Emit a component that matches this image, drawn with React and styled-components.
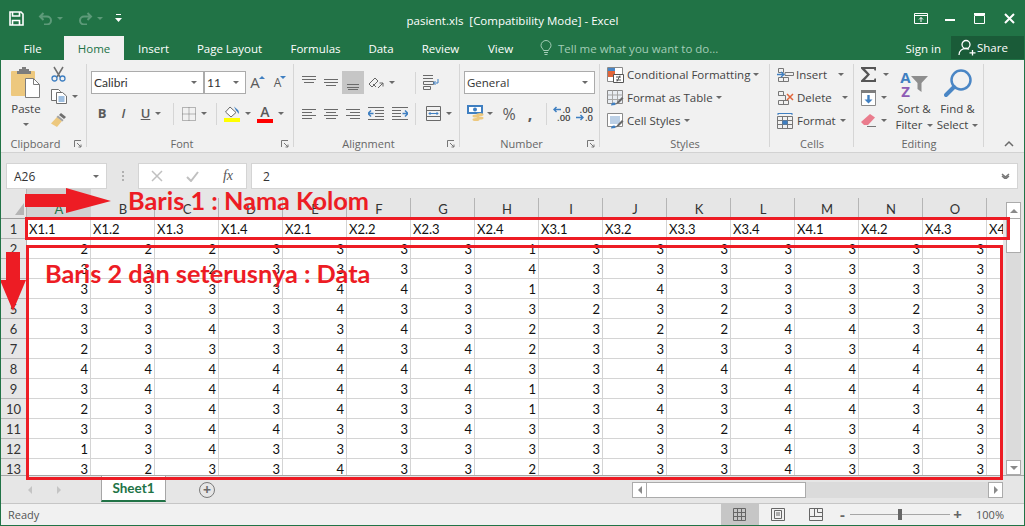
import React from "react";
import styled, { createGlobalStyle } from "styled-components";

const GREEN = "#217346";
const RED = "#ed1c24";
const GRAY = "#6a6a6a";
const BLUE = "#3f7fc1";
const UI = '"Open Sans", "Noto Sans", sans-serif';
const SHEET = '"Lato", "Liberation Sans", sans-serif';

const GlobalStyle = createGlobalStyle`
  html, body { margin: 0; padding: 0; background: #fff; }
  body { font-family: ${UI}; overflow: hidden; }
`;

const Window = styled.div`
  position: relative;
  width: 1025px;
  height: 526px;
  box-sizing: border-box;
  border: 1px solid ${GREEN};
  border-top: 0;
  display: flex;
  flex-direction: column;
  overflow: hidden;
  background: #e6e6e6;
`;

/* title bar */
const TitleBar = styled.header`
  height: 36px;
  background: ${GREEN};
  display: grid;
  grid-template-columns: 1fr auto 1fr;
  align-items: center;
  color: #fff;
`;
const Qat = styled.div`
  display: flex;
  align-items: center;
  padding: 1px 0 0 8px;
`;
const QatItem = styled.span`
  display: flex;
  align-items: center;
  gap: 4px;
  margin-right: ${(p) => p.$mr || 0}px;
`;
const DimCaret = styled.i`
  width: 0;
  height: 0;
  border: 3px solid transparent;
  border-bottom: 0;
  border-top-color: #5d9a79;
`;
const Title = styled.div`
  font-size: 11.5px;
  white-space: pre;
  padding-top: 4px;
`;
const WindowButtons = styled.div`
  display: flex;
  justify-content: flex-end;
`;
const WindowButton = styled.span`
  width: 29.5px;
  display: flex;
  justify-content: center;
`;

/* ribbon tabs */
const TabRow = styled.nav`
  height: 24px;
  background: ${GREEN};
  display: flex;
  align-items: stretch;
`;
const Tab = styled.div`
  width: ${(p) => p.$w}px;
  display: flex;
  align-items: center;
  justify-content: center;
  font-size: 11.5px;
  color: ${(p) => (p.$active ? GREEN : "#fff")};
  background: ${(p) => (p.$active ? "#f1f1f1" : "transparent")};
`;
const TellMe = styled.div`
  display: flex;
  align-items: center;
  gap: 6px;
  margin-left: 13px;
  font-size: 11.5px;
  color: #a3cdb6;
`;
const SignIn = styled.div`
  margin-left: auto;
  margin-right: 10px;
  font-size: 11.5px;
  color: #fff;
  align-self: center;
`;
const Share = styled.div`
  width: 73px;
  margin-bottom: 1px;
  background: #1a5b38;
  color: #fff;
  font-size: 11.5px;
  display: flex;
  align-items: center;
  gap: 0;
  padding-left: 7px;
  box-sizing: border-box;
`;

/* ribbon */
const Ribbon = styled.section`
  height: 93px;
  box-sizing: border-box;
  background: #f1f1f1;
  border-bottom: 1px solid #d2d2d2;
  display: flex;
  color: #444;
  font-size: 11.5px;
`;
const Group = styled.div`
  width: ${(p) => p.$w}px;
  flex: ${(p) => (p.$grow ? 1 : "none")};
  display: flex;
  flex-direction: column;
  background: ${(p) =>
    p.$grow ? "none" : "linear-gradient(#d6d6d6, #d6d6d6) right 4px / 1px 83px no-repeat"};
`;
const GroupBody = styled.div`
  flex: 1;
  min-height: 0;
  display: flex;
`;
const GroupFooter = styled.div`
  height: 17px;
  display: flex;
  align-items: center;
  font-size: 11px;
  color: #666;
`;
const GroupLabel = styled.span`
  flex: 1;
  text-align: center;
`;
const Launcher = styled.span`
  width: 17px;
  box-sizing: border-box;
  padding-left: 4px;
  display: flex;
`;
const Collapse = styled.span`
  margin-left: auto;
  margin-right: 10px;
  display: flex;
`;
const Stack = styled.div`
  display: flex;
  flex-direction: column;
  gap: 8px;
  padding: 11px 0 0 4px;
`;
const Row = styled.div`
  display: flex;
  align-items: center;
  height: 23px;
`;
const IconBtn = styled.span`
  width: ${(p) => p.$w}px;
  height: 23px;
  display: flex;
  align-items: center;
  justify-content: center;
  gap: ${(p) => p.$gap ?? 5}px;
  background: ${(p) => (p.$active ? "#c6c6c6" : "transparent")};
`;
const Caret = styled.i`
  flex: none;
  width: 0;
  height: 0;
  border: 3px solid transparent;
  border-bottom: 0;
  border-top-color: ${GRAY};
`;
const CellCaret = styled(Caret)`
  margin-left: ${(p) => p.$ml}px;
`;
const VSep = styled.span`
  width: 1px;
  height: 22px;
  background: #d6d6d6;
  margin: 0 ${(p) => p.$r ?? 4}px 0 ${(p) => p.$l ?? 5}px;
`;
const Select = styled.div`
  width: ${(p) => p.$w}px;
  height: 23px;
  box-sizing: border-box;
  border: 1px solid #ababab;
  background: #fff;
  color: #333;
  padding: 0 6px 0 2px;
  display: flex;
  align-items: center;
  justify-content: space-between;
  font-family: ${(p) => p.$font || UI};
  font-size: ${(p) => (p.$font ? 12 : 11.5)}px;
`;
const GlyphText = styled.span`
  color: ${(p) => p.$color || "#5a5a5a"};
  font-size: ${(p) => p.$size || 13}px;
  font-weight: ${(p) => p.$weight || 400};
  font-style: ${(p) => (p.$italic ? "italic" : "normal")};
  text-decoration: ${(p) => (p.$under ? "underline" : "none")};
  line-height: 1;
`;
const FontColorWrap = styled.span`
  width: 16px;
  height: 18px;
  box-sizing: border-box;
  display: flex;
  justify-content: center;
  border-bottom: 4px solid #ff0000;
`;
const SizeArrow = styled.i`
  align-self: flex-start;
  margin: 5px 0 0 -1px;
  width: 0;
  height: 0;
  border: 3px solid transparent;
  ${(p) => (p.$up ? `border-top: 0; border-bottom-color: ${BLUE};` : `border-bottom: 0; border-top-color: ${BLUE};`)}
`;
const Decimals = styled.span`
  display: flex;
  flex-direction: column;
  align-items: flex-end;
  font-size: 9.5px;
  line-height: 8px;
  color: #444;
  font-weight: 600;
`;
const DecimalLine = styled.span`
  display: flex;
  align-items: center;
  gap: 1px;
`;

const PasteBtn = styled.div`
  width: 50px;
  display: flex;
  flex-direction: column;
  align-items: center;
  padding-top: 7px;
`;
const PasteLabel = styled.span`
  margin: 3px 0 6px;
  line-height: 16px;
`;
const SmallCol = styled.div`
  display: flex;
  flex-direction: column;
  padding-top: 2px;
`;
const SmallBtn = styled.div`
  height: 23px;
  display: flex;
  align-items: center;
  gap: ${(p) => p.$gap ?? 5}px;
  padding-left: ${(p) => p.$pl ?? 0}px;
  white-space: nowrap;
`;
const List = styled.div`
  ${(p) => (p.$w ? `width: ${p.$w}px; box-sizing: border-box;` : "")}
  display: flex;
  flex-direction: column;
  padding: 3px 0 0 6px;
`;
const Big = styled.div`
  width: ${(p) => p.$w}px;
  display: flex;
  flex-direction: column;
  align-items: center;
  padding-top: 7px;
  line-height: 16px;
`;
const BigLabel = styled.span`
  display: flex;
  align-items: center;
  gap: 4px;
  white-space: nowrap;
`;
const BigIcon = styled.span`
  height: 33px;
  margin-bottom: 1px;
  display: flex;
  align-items: center;
`;
const SortLetters = styled.span`
  display: flex;
  flex-direction: column;
  align-items: center;
  font-size: 15px;
  font-weight: 700;
  line-height: 14px;
`;
const Letter = styled.span`
  color: ${(p) => p.$color};
`;

/* formula bar */
const FormulaBar = styled.div`
  height: 36px;
  box-sizing: border-box;
  padding: 10px 6px 0 5px;
  display: flex;
  align-items: stretch;
  background: #e6e6e6;
  font-size: 12px;
  color: #333;
`;
const FieldBox = styled.div`
  box-sizing: border-box;
  width: ${(p) => p.$w}px;
  flex: ${(p) => (p.$grow ? 1 : "none")};
  background: #fff;
  border: 1px solid #d4d4d4;
  display: flex;
  align-items: center;
  justify-content: space-between;
  padding: 0 7px 0 ${(p) => p.$pl ?? 6}px;
`;
const Dots = styled.span`
  width: 31px;
  display: flex;
  flex-direction: column;
  align-items: center;
  justify-content: center;
  gap: 2px;
  & > i {
    width: 2px;
    height: 2px;
    background: #b0b0b0;
  }
`;
const FxButtons = styled.div`
  width: 109px;
  box-sizing: border-box;
  margin-right: 4px;
  background: #fff;
  border: 1px solid #d4d4d4;
  display: grid;
  grid-template-columns: 1fr 36px 36px;
  justify-items: center;
  align-items: center;
`;
const Fx = styled.span`
  font-family: "Liberation Serif", serif;
  font-style: italic;
  font-size: 14px;
  color: #555;
`;

/* sheet */
const SheetArea = styled.div`
  height: 286px;
  display: flex;
`;
const Grid = styled.div`
  width: 1002px;
  overflow: hidden;
  display: grid;
  grid-template-columns: 26px repeat(16, 64px);
  grid-template-rows: 30px;
  grid-auto-rows: 20px;
  background: #fff;
  font-family: ${SHEET};
  font-size: 13px;
  color: #111;
`;
const Corner = styled.div`
  background: #e6e6e6;
  border-right: 1px solid #b5b5b5;
  border-bottom: 1px solid #9e9e9e;
  box-sizing: border-box;
  display: flex;
  align-items: flex-end;
  justify-content: flex-end;
  padding: 0 2px 3px 0;
  &::after {
    content: "";
    width: 0;
    height: 0;
    border-left: 9px solid transparent;
    border-bottom: 12px solid #b5b5b5;
  }
`;
const ColHead = styled.div`
  box-sizing: border-box;
  border-bottom: 1px solid #9e9e9e;
  background: ${(p) =>
    p.$sel
      ? "#d2d2d2"
      : "linear-gradient(#b5b5b5, #b5b5b5) right 9px / 1px 21px no-repeat, #e6e6e6"};
  color: ${(p) => (p.$sel ? GREEN : "#333")};
  display: flex;
  align-items: flex-end;
  justify-content: center;
  line-height: 18px;
`;
const RowHead = styled.div`
  box-sizing: border-box;
  background: #e6e6e6;
  border-right: 1px solid #b5b5b5;
  border-bottom: 1px solid #b5b5b5;
  display: flex;
  align-items: center;
  justify-content: center;
  color: #333;
`;
const Cell = styled.div`
  box-sizing: border-box;
  border-right: 1px solid #d4d4d4;
  border-bottom: 1px solid #d4d4d4;
  padding: 0 2px;
  display: flex;
  align-items: center;
  justify-content: ${(p) => (p.$text ? "flex-start" : "flex-end")};
  overflow: hidden;
  white-space: nowrap;
`;
const VScroll = styled.div`
  flex: 1;
  display: flex;
  flex-direction: column;
  padding: 13px 3px 0 3px;
`;
const VTrack = styled.div`
  flex: 1;
  background: #dbdbdb;
  display: flex;
  flex-direction: column;
  justify-content: space-between;
`;
const ScrollBtn = styled.div`
  box-sizing: border-box;
  width: ${(p) => p.$w}px;
  height: ${(p) => p.$h}px;
  background: #fff;
  border: 1px solid #ababab;
  display: flex;
  align-items: center;
  justify-content: center;
`;
const VThumb = styled.div`
  height: 34px;
  box-sizing: border-box;
  background: #fff;
  border: 1px solid #ababab;
  border-top: 0;
`;
const VGroup = styled.div`
  display: flex;
  flex-direction: column;
`;
const opposite = { up: "bottom", down: "top", left: "right", right: "left" };
const same = { up: "top", down: "bottom", left: "left", right: "right" };
const Tri = styled.i`
  width: 0;
  height: 0;
  border: 4px solid transparent;
  border-${(p) => same[p.$dir]}: 0;
  border-${(p) => opposite[p.$dir]}-color: ${(p) => p.$c || "#8a8a8a"};
`;

/* sheet tabs */
const SheetTabs = styled.div`
  height: 29px;
  box-sizing: border-box;
  border-top: 1px solid #a6a6a6;
  border-bottom: 1px solid #c6c6c6;
  display: flex;
  align-items: center;
  background: #e6e6e6;
`;
const TabNav = styled.div`
  width: 100px;
  display: flex;
  gap: 25px;
  padding-left: 27px;
  box-sizing: border-box;
`;
const SheetTab = styled.div`
  width: 65px;
  height: 26px;
  margin-top: -2px;
  box-sizing: border-box;
  background: #fff;
  border: 1px solid #a6a6a6;
  border-top: 0;
  border-bottom: 2px solid ${GREEN};
  color: ${GREEN};
  font-family: ${SHEET};
  font-weight: 700;
  font-size: 13.5px;
  display: flex;
  align-items: center;
  justify-content: center;
`;
const AddSheet = styled.div`
  margin-left: 33px;
  width: 16px;
  height: 16px;
  box-sizing: border-box;
  border: 1px solid #7a7a7a;
  border-radius: 50%;
  display: flex;
  align-items: center;
  justify-content: center;
  color: #6a6a6a;
  font-size: 14px;
  font-weight: 700;
  line-height: 1;
`;
const HScroll = styled.div`
  margin-left: auto;
  margin-right: 21px;
  width: 371px;
  height: 16px;
  background: #dbdbdb;
  display: flex;
  justify-content: space-between;
`;
const HGroup = styled.div`
  display: flex;
`;
const HThumb = styled.div`
  width: 159px;
  box-sizing: border-box;
  background: #fff;
  border: 1px solid #ababab;
  border-left: 0;
`;

/* status bar */
const StatusBar = styled.footer`
  flex: 1;
  background: #f1f1f1;
  display: flex;
  align-items: center;
  font-size: 11px;
  color: #555;
  padding-right: 20px;
`;
const Ready = styled.span`
  padding-left: 7px;
  margin-right: auto;
`;
const ViewBtn = styled.span`
  width: 38px;
  height: 21px;
  display: flex;
  align-items: center;
  justify-content: center;
  background: ${(p) => (p.$active ? "#c6c6c6" : "transparent")};
`;
const ZoomSign = styled.span`
  width: ${(p) => p.$w}px;
  display: flex;
  justify-content: center;
  color: #666;
  font-size: 15px;
  font-weight: 700;
  line-height: 1;
`;
const Slider = styled.span`
  position: relative;
  width: 100px;
  height: 1px;
  background: #a6a6a6;
  &::after {
    content: "";
    position: absolute;
    left: 48px;
    top: -5px;
    width: 4px;
    height: 11px;
    background: #666;
  }
`;
const ZoomValue = styled.span`
  margin-left: 11px;
`;

/* red annotations drawn over the sheet */
const RowFrame = styled.div`
  position: absolute;
  left: 24px;
  top: 217px;
  width: 985px;
  height: 23px;
  box-sizing: border-box;
  border: 3px solid ${RED};
`;
const DataFrame = styled.div`
  position: absolute;
  left: 25px;
  top: 245px;
  width: 977px;
  height: 235px;
  box-sizing: border-box;
  border: 3px solid ${RED};
`;
const Note = styled.div`
  position: absolute;
  left: ${(p) => p.$x}px;
  top: ${(p) => p.$y}px;
  color: ${RED};
  font-family: ${SHEET};
  font-weight: 700;
  font-size: 25.3px;
  line-height: 28px;
  white-space: nowrap;
`;
const Arrow = styled.svg`
  position: absolute;
  left: ${(p) => p.$x}px;
  top: ${(p) => p.$y}px;
`;

/* icons */
const Lines = ({ w = 14, h = 16, rows, color = "#6a6a6a" }) => (
  <svg width={w} height={h} viewBox={`0 0 ${w} ${h}`}>
    {rows.map(([x1, x2, y], i) => (
      <path key={i} d={`M${x1} ${y + 0.5}H${x2}`} stroke={color} />
    ))}
  </svg>
);
const top = [[0, 14, 1], [0, 14, 4], [2, 12, 7]];
const mid = [[0, 14, 4], [0, 14, 7], [2, 12, 10]];
const bot = [[1, 13, 9], [1, 13, 12], [2, 12, 14]];
const lft = [[0, 14, 3], [0, 10, 6], [0, 14, 9], [0, 10, 12]];
const ctr = [[0, 14, 3], [2, 12, 6], [0, 14, 9], [2, 12, 12]];
const rgt = [[0, 14, 3], [4, 14, 6], [0, 14, 9], [4, 14, 12]];

const SaveIcon = () => (
  <svg width="15" height="15" viewBox="0 0 15 15" fill="none" stroke="#fff" strokeWidth="1.6">
    <path d="M1 1h11l2 2v11H1z" />
    <path d="M3.5 1v4h7V1M3.5 14V9.5h7V14" />
  </svg>
);
const TurnIcon = ({ flip }) => (
  <svg width="15" height="13" viewBox="0 0 15 13" fill="none" stroke="#5d9a79" strokeWidth="2" style={flip ? { transform: "scaleX(-1)" } : undefined}>
    <path d="M5.5 1 2 4.5 5.5 8M2 4.5h7a4 4 0 0 1 0 8H6" />
  </svg>
);
const CustomizeIcon = () => (
  <svg width="7" height="9" viewBox="0 0 7 9" fill="#fff">
    <path d="M1 0h5v1H1zM0 4h7L3.5 8z" />
  </svg>
);
const RibbonDisplayIcon = () => (
  <svg width="14" height="11" viewBox="0 0 14 11" fill="none" stroke="#fff">
    <path d="M.5.5h13v10H.5zM.5 2.5h13" />
    <path d="M7 9V4.5M5 6.5l2-2 2 2" />
  </svg>
);
const MinIcon = () => (
  <svg width="10" height="11" viewBox="0 0 10 11" fill="#fff"><path d="M0 6h10v2H0z" /></svg>
);
const MaxIcon = () => (
  <svg width="11" height="11" viewBox="0 0 11 11" fill="none" stroke="#fff">
    <path d="M.5 2.5h10v8H.5z" /><path d="M0 1h11" strokeWidth="2" />
  </svg>
);
const CloseIcon = () => (
  <svg width="11" height="11" viewBox="0 0 11 11" stroke="#fff" strokeWidth="2"><path d="m1 1 9 9M10 1l-9 9" /></svg>
);
const BulbIcon = () => (
  <svg width="12" height="16" viewBox="0 0 12 16" fill="none" stroke="#a3cdb6">
    <path d="M3.5 10.5C3 8.5 1 7.8 1 5.5a5 5 0 0 1 10 0c0 2.3-2 3-2.5 5z" />
    <path d="M4 12.5h4M4.5 14.5h3" />
  </svg>
);
const ShareIcon = () => (
  <svg width="19" height="17" viewBox="0 0 19 17" fill="none" stroke="#fff" strokeWidth="1.3">
    <circle cx="8" cy="5.5" r="4" />
    <path d="M1 16c0-4 3-6.5 7-6.5 1 0 2 .2 3 .6M14.5 11v5.500M11.5 13.800h6" />
  </svg>
);
const PasteIcon = () => (
  <svg width="30" height="31" viewBox="0 0 30 31">
    <rect x="0" y="4" width="24" height="25" rx="1" fill="#edc87e" />
    <path d="M8 4V2h3V0h4v2h3v2h2v3H6V4z" fill="#7d7d7d" />
    <path d="M14.5 11.5h8l6 6v13h-14z" fill="#fff" stroke="#7d7d7d" />
    <path d="M22.5 11.5v6h6" fill="none" stroke="#7d7d7d" />
  </svg>
);
const ScissorsIcon = () => (
  <svg width="15" height="16" viewBox="0 0 15 16" fill="none">
    <path d="M3 1l6 10M12 1 6 11" stroke="#6f6f6f" strokeWidth="1.5" />
    <circle cx="3.5" cy="12.5" r="2.5" stroke={BLUE} strokeWidth="1.3" />
    <circle cx="11.5" cy="12.5" r="2.5" stroke={BLUE} strokeWidth="1.3" />
  </svg>
);
const CopyIcon = () => (
  <svg width="16" height="15" viewBox="0 0 16 15" fill="#fff" stroke="#6f6f6f">
    <path d="M.5.5h7l2 2v9h-9z" />
    <path d="M5.5 3.5h6l4 3.500v7.500h-10z" />
    <path d="M7.5 8h6M7.5 10h6M7.5 12h6" stroke={BLUE} />
  </svg>
);
const PainterIcon = () => (
  <svg width="17" height="15" viewBox="0 0 17 15">
    <path d="m10 1 5 4-2 2-5-4z" fill="#6f6f6f" />
    <path d="M6 5 11 9 6 15 0 11.5z" fill="#edc87e" />
    <path d="m7 3.5 5.500 4.500-1 1.500L5.500 5z" fill="#a1a1a1" />
  </svg>
);
const LauncherIcon = () => (
  <svg width="8" height="8" viewBox="0 0 8 8" fill="none" stroke="#777">
    <path d="M.5 7V.5H7M3 3l4 4M7 4.5V7H4.5" />
  </svg>
);
const BorderIcon = () => (
  <svg width="14" height="14" viewBox="0 0 14 14" fill="none" stroke="#777" strokeDasharray="1 1">
    <path d="M.5.5h13v13H.5zM7 .5v13M.5 7h13" />
  </svg>
);
const FillIcon = () => (
  <svg width="16" height="18" viewBox="0 0 16 18">
    <path d="m6 2 6 5.500L7 12 1.500 7z" fill="#fff" stroke="#6a6a6a" />
    <path d="M10 1.500 14 5c1 1 1 3 .7 4-.6-1-1.200-2-2.700-3.500z" fill={BLUE} />
    <path d="M0 13h16v4H0z" fill="#ffff00" />
  </svg>
);
const OrientIcon = () => (
  <svg width="17" height="16" viewBox="0 0 17 16" fill="none" stroke="#666">
    <path d="m2 9 6-6 3 3-6 6zM11 13l5-5M16 8v3.500M16 8h-3.500M6 9l3 3" />
  </svg>
);
const WrapIcon = () => (
  <svg width="16" height="15" viewBox="0 0 16 15" fill="none">
    <path d="M0 .5h10M0 3.5h10" stroke="#6a6a6a" />
    <path d="M.5 6.5h10v3H.5zM.5 11.5h7v3h-7z" stroke="#6a6a6a" />
    <path d="M15 4v4h-4.500M12.500 6l-2 2 2 2" stroke={BLUE} />
  </svg>
);
const MergeIcon = () => (
  <svg width="15" height="15" viewBox="0 0 15 15" fill="none">
    <path d="M.5.5h14v14H.5zM.5 4.500h14M.5 10.500h14" stroke="#6a6a6a" />
    <path d="M3 7.500h9M4.500 6 3 7.500 4.500 9M10.500 6 12 7.500 10.500 9" stroke={BLUE} />
  </svg>
);
const IndentIcon = ({ flip }) => (
  <svg width="16" height="13" viewBox="0 0 16 13" fill="none" style={flip ? { transform: "scaleX(-1)" } : undefined}>
    <path d="M0 .5h16M7 3.500h9M7 6.500h9M7 9.500h9M0 12.500h16" stroke="#6a6a6a" />
    <path d="M5.500 6.500H0M3 3.500l-3 3 3 3" stroke={BLUE} strokeWidth="1.5" />
  </svg>
);
const MoneyIcon = () => (
  <svg width="17" height="17" viewBox="0 0 17 17">
    <path d="M0 0h16v9H0z" fill={BLUE} />
    <path d="M2 2h12v5H2z" fill="#fff" />
    <circle cx="8" cy="4.5" r="2" fill={BLUE} />
    <ellipse cx="9" cy="11" rx="3.5" ry="1.5" fill="#edc87e" />
    <ellipse cx="13" cy="9.5" rx="3.5" ry="1.5" fill="#edc87e" />
    <ellipse cx="9" cy="14.500" rx="3.5" ry="1.5" fill="#edc87e" />
    <ellipse cx="13" cy="13" rx="3.5" ry="1.5" fill="#edc87e" />
  </svg>
);
const SmallArrow = ({ left }) => (
  <svg width="8" height="7" viewBox="0 0 8 7" fill="none" stroke={BLUE} strokeWidth="1.5" style={left ? { transform: "scaleX(-1)" } : undefined}>
    <path d="M0 3.500h7M4.500 1 7 3.500 4.500 6" />
  </svg>
);
const CondIcon = () => (
  <svg width="17" height="16" viewBox="0 0 17 16">
    <path d="M.5.5h15v14H.5z" fill="#fff" stroke="#8a8a8a" />
    <path d="M1 1h7v3H1z" fill="#4a86c5" />
    <path d="M1 4h7v6H1z" fill="#e0653a" />
    <path d="M6.500 7.500h10v8h-10z" fill="#fff" stroke="#555" />
    <path d="M9 10h5M9 13h5M13 8.500l-3 6" stroke="#555" fill="none" />
  </svg>
);
const TableIcon = ({ plain }) => (
  <svg width="17" height="16" viewBox="0 0 17 16">
    <path d="M.5.5h15v13H.5z" fill={plain ? "#fff" : "#e9edf2"} stroke="#8a8a8a" />
    {!plain && <path d="M5.500.5v13M10.500.5v13M.5 5h15M.5 9.500h15" stroke="#a5a5a5" fill="none" />}
    <path d="M3 3h10v8H3z" fill={plain ? "#bcd0e6" : "none"} />
    <path d="m8 15 3-4 4-4 1.500 1.500-4 4z" fill="#6a6a6a" />
    <path d="M4 15.500c0-2 1.500-3 3-3s2 1.500 1 2.500z" fill={BLUE} />
  </svg>
);
const InsertCellsIcon = () => (
  <svg width="17" height="16" viewBox="0 0 17 16" fill="none">
    <path d="M1.500 1.500h5v4h-5zM1.500 10.500h10v4h-10zM6.500 10.500v4" stroke="#777" />
    <path d="M8 5.500h8.500v3H8z" stroke="#777" />
    <path d="M0 7.500h7M4 5l3 2.500L4 10" stroke={BLUE} strokeWidth="1.3" />
  </svg>
);
const DeleteCellsIcon = () => (
  <svg width="17" height="16" viewBox="0 0 17 16" fill="none">
    <path d="M1.500 1.500h5v4h-5zM1.500 10.500h10v4h-10zM6.500 10.500v4M1.500 5.500h7v5" stroke="#777" />
    <path d="m10 4 6 6M16 4l-6 6" stroke="#e0653a" strokeWidth="1.5" />
  </svg>
);
const FormatCellsIcon = () => (
  <svg width="17" height="16" viewBox="0 0 17 16" fill="none">
    <path d="M1 .5h14M1 0v2M15 0v2" stroke={BLUE} />
    <path d="M.5 3.500h15v12H.5zM5.500 3.500v12M10.500 3.500v12M.5 7.500h15M.5 11.500h15" stroke="#777" />
    <path d="M5.500 7.500h5v4h-5z" fill={BLUE} />
  </svg>
);
const SumIcon = () => (
  <svg width="15" height="15" viewBox="0 0 15 15">
    <path d="M0 0h15v3.500h-1.500L13 2H4l5 5.500L4 13h9l.5-1.500H15V15H0v-1.500L6 7.500 0 1.500z" fill="#555" />
  </svg>
);
const FillDownIcon = () => (
  <svg width="15" height="16" viewBox="0 0 15 16">
    <path d="M.5.5h14v15H.5z" fill="#fff" stroke="#8a8a8a" />
    <path d="M0 0h15v3H0z" fill="#7d7d7d" />
    <path d="M6.300 5h2.400v4.500H11.500l-4 4-4-4h2.800z" fill={BLUE} />
  </svg>
);
const EraserIcon = () => (
  <svg width="15" height="14" viewBox="0 0 15 14">
    <path d="m9 0 5 3.500L7 11H3L0 8z" fill="#ea7c8d" />
    <path d="M6 12.500h9" stroke="#777" />
  </svg>
);
const FunnelIcon = () => (
  <svg width="17" height="16" viewBox="0 0 17 16">
    <path d="M0 0h17L10.500 7v9l-4-3V7z" fill="#8e8e8e" />
  </svg>
);
const FindIcon = () => (
  <svg width="28" height="29" viewBox="0 0 28 29" fill="none">
    <circle cx="17" cy="11" r="9.5" stroke="#4a86c5" strokeWidth="2.5" />
    <path d="M10 18 2 26" stroke="#4a86c5" strokeWidth="4" strokeLinecap="round" />
  </svg>
);
const ChevronUp = () => (
  <svg width="10" height="7" viewBox="0 0 10 7" fill="none" stroke="#6a6a6a" strokeWidth="1.5"><path d="m1 6 4-4 4 4" /></svg>
);
const ChevronDown = () => (
  <svg width="9" height="6" viewBox="0 0 9 6" fill="none" stroke="#777" strokeWidth="1.5"><path d="m1 1 3.500 3L8 1M1 3l3.500 3L8 3" /></svg>
);
const CrossIcon = () => (
  <svg width="12" height="12" viewBox="0 0 12 12" stroke="#c0c0c0" strokeWidth="1.5"><path d="m1 1 10 10M11 1 1 11" /></svg>
);
const CheckIcon = () => (
  <svg width="13" height="11" viewBox="0 0 13 11" fill="none" stroke="#c0c0c0" strokeWidth="2"><path d="m1 6 4 4 7-9" /></svg>
);
const GridViewIcon = () => (
  <svg width="14" height="13" viewBox="0 0 14 13" fill="none" stroke="#666">
    <path d="M.5.5h12v12H.5zM.5 4.500h12M.5 8.500h12M4.500.5v12M8.500.5v12" />
  </svg>
);
const PageViewIcon = () => (
  <svg width="14" height="13" viewBox="0 0 14 13" fill="none" stroke="#666">
    <path d="M.5.5h13v12H.5zM3.500 2.500h7v8h-7zM5 5h4M5 7h4" />
  </svg>
);
const BreakViewIcon = () => (
  <svg width="14" height="13" viewBox="0 0 14 13" fill="none" stroke="#666">
    <path d="M.5.5h13v12H.5zM.5 8.500h13M5.500.5v8M8.500.5v4h5" />
  </svg>
);

const columns = "ABCDEFGHIJKLMNOP".split("");
const headers = ["X1.1", "X1.2", "X1.3", "X1.4", "X2.1", "X2.2", "X2.3", "X2.4", "X3.1", "X3.2", "X3.3", "X3.4", "X4.1", "X4.2", "X4.3", "X4.4"];
const rows = [
  "222333313333333",
  "332333343333333",
  "333344313433333",
  "333343332323323",
  "334334323224434",
  "233343423333344",
  "444444433444444",
  "344443413334444",
  "234343313434434",
  "334433433324343",
  "134333333334333",
  "323343323334333",
];

export default function App() {
  return (
    <Window>
      <GlobalStyle />
      <TitleBar>
        <Qat>
          <QatItem $mr={14}><SaveIcon /></QatItem>
          <QatItem $mr={15}><TurnIcon /><DimCaret /></QatItem>
          <QatItem $mr={12}><TurnIcon flip /><DimCaret /></QatItem>
          <QatItem><CustomizeIcon /></QatItem>
        </Qat>
        <Title>pasient.xls  [Compatibility Mode] - Excel</Title>
        <WindowButtons>
          <WindowButton><RibbonDisplayIcon /></WindowButton>
          <WindowButton><MinIcon /></WindowButton>
          <WindowButton><MaxIcon /></WindowButton>
          <WindowButton><CloseIcon /></WindowButton>
        </WindowButtons>
      </TitleBar>

      <TabRow>
        <Tab $w={63}>File</Tab>
        <Tab $w={60} $active>Home</Tab>
        <Tab $w={59}>Insert</Tab>
        <Tab $w={93}>Page Layout</Tab>
        <Tab $w={79}>Formulas</Tab>
        <Tab $w={52}>Data</Tab>
        <Tab $w={67}>Review</Tab>
        <Tab $w={53}>View</Tab>
        <TellMe><BulbIcon />Tell me what you want to do...</TellMe>
        <SignIn>Sign in</SignIn>
        <Share><ShareIcon />Share</Share>
      </TabRow>

      <Ribbon>
        <Group $w={86}>
          <GroupBody>
            <PasteBtn>
              <PasteIcon />
              <PasteLabel>Paste</PasteLabel>
              <Caret />
            </PasteBtn>
            <SmallCol>
              <SmallBtn><ScissorsIcon /></SmallBtn>
              <SmallBtn><CopyIcon /><Caret /></SmallBtn>
              <SmallBtn><PainterIcon /></SmallBtn>
            </SmallCol>
          </GroupBody>
          <GroupFooter><GroupLabel>Clipboard</GroupLabel><Launcher><LauncherIcon /></Launcher></GroupFooter>
        </Group>

        <Group $w={207}>
          <GroupBody>
            <Stack>
              <Row>
                <Select $w={113} $font={SHEET}>Calibri<Caret /></Select>
                <Select $w={42} $font={SHEET}>11<Caret /></Select>
                <IconBtn $w={23} $gap={0}><GlyphText $size={15}>A</GlyphText><SizeArrow $up /></IconBtn>
                <IconBtn $w={22} $gap={0}><GlyphText $size={12}>A</GlyphText><SizeArrow /></IconBtn>
              </Row>
              <Row>
                <IconBtn $w={22}><GlyphText $weight={700}>B</GlyphText></IconBtn>
                <IconBtn $w={21}><GlyphText $italic $weight={600}>I</GlyphText></IconBtn>
                <IconBtn $w={34}><GlyphText $under $weight={600}>U</GlyphText><Caret /></IconBtn>
                <VSep />
                <IconBtn $w={33}><BorderIcon /><Caret /></IconBtn>
                <VSep />
                <IconBtn $w={33}><FillIcon /><Caret /></IconBtn>
                <IconBtn $w={33}>
                  <FontColorWrap><GlyphText $size={14} $weight={600}>A</GlyphText></FontColorWrap>
                  <Caret />
                </IconBtn>
              </Row>
            </Stack>
          </GroupBody>
          <GroupFooter><GroupLabel>Font</GroupLabel><Launcher><LauncherIcon /></Launcher></GroupFooter>
        </Group>

        <Group $w={166}>
          <GroupBody>
            <Stack>
              <Row>
                <IconBtn $w={22}><Lines rows={top} /></IconBtn>
                <IconBtn $w={22}><Lines rows={mid} /></IconBtn>
                <IconBtn $w={22} $active><Lines rows={bot} /></IconBtn>
                <IconBtn $w={34}><OrientIcon /><Caret /></IconBtn>
                <VSep $l={17} $r={5} />
                <IconBtn $w={20}><WrapIcon /></IconBtn>
              </Row>
              <Row>
                <IconBtn $w={22}><Lines rows={lft} /></IconBtn>
                <IconBtn $w={22}><Lines rows={ctr} /></IconBtn>
                <IconBtn $w={22}><Lines rows={rgt} /></IconBtn>
                <IconBtn $w={24}><IndentIcon /></IconBtn>
                <IconBtn $w={24}><IndentIcon flip /></IconBtn>
                <VSep $l={3} $r={8} />
                <IconBtn $w={30}><MergeIcon /><Caret /></IconBtn>
              </Row>
            </Stack>
          </GroupBody>
          <GroupFooter><GroupLabel>Alignment</GroupLabel><Launcher><LauncherIcon /></Launcher></GroupFooter>
        </Group>

        <Group $w={140}>
          <GroupBody>
            <Stack>
              <Row><Select $w={131}>General<Caret /></Select></Row>
              <Row>
                <IconBtn $w={32} $gap={3}><MoneyIcon /><Caret /></IconBtn>
                <IconBtn $w={26}><GlyphText $size={16}>%</GlyphText></IconBtn>
                <IconBtn $w={16}><GlyphText $size={16} $weight={700}>,</GlyphText></IconBtn>
                <VSep $l={8} $r={4} />
                <IconBtn $w={22}>
                  <Decimals>
                    <DecimalLine><SmallArrow left />.0</DecimalLine>
                    <span>.00</span>
                  </Decimals>
                </IconBtn>
                <IconBtn $w={23}>
                  <Decimals>
                    <span>.00</span>
                    <DecimalLine><SmallArrow />.0</DecimalLine>
                  </Decimals>
                </IconBtn>
              </Row>
            </Stack>
          </GroupBody>
          <GroupFooter><GroupLabel>Number</GroupLabel><Launcher><LauncherIcon /></Launcher></GroupFooter>
        </Group>

        <Group $w={170}>
          <GroupBody>
            <List>
              <SmallBtn $pl={1} $gap={3}><CondIcon />Conditional Formatting<Caret /></SmallBtn>
              <SmallBtn $pl={1} $gap={3}><TableIcon />Format as Table<Caret /></SmallBtn>
              <SmallBtn $pl={1} $gap={3}><TableIcon plain />Cell Styles<Caret /></SmallBtn>
            </List>
          </GroupBody>
          <GroupFooter><GroupLabel>Styles</GroupLabel></GroupFooter>
        </Group>

        <Group $w={84}>
          <GroupBody>
            <List>
              <SmallBtn $pl={1} $gap={2}><InsertCellsIcon />Insert<CellCaret $ml={9} /></SmallBtn>
              <SmallBtn $pl={1} $gap={3}><DeleteCellsIcon />Delete<CellCaret $ml={7} /></SmallBtn>
              <SmallBtn $pl={1} $gap={3}><FormatCellsIcon />Format<CellCaret $ml={1} /></SmallBtn>
            </List>
          </GroupBody>
          <GroupFooter><GroupLabel>Cells</GroupLabel></GroupFooter>
        </Group>

        <Group $w={130}>
          <GroupBody>
            <List $w={38}>
              <SmallBtn $pl={1} $gap={7}><SumIcon /><Caret /></SmallBtn>
              <SmallBtn $pl={1} $gap={5}><FillDownIcon /><Caret /></SmallBtn>
              <SmallBtn $pl={1} $gap={5}><EraserIcon /><Caret /></SmallBtn>
            </List>
            <Big $w={44}>
              <BigIcon>
                <SortLetters><Letter $color={BLUE}>A</Letter><Letter $color="#8e5bb5">Z</Letter></SortLetters>
                <FunnelIcon />
              </BigIcon>
              <span>Sort &amp;</span>
              <BigLabel>Filter<Caret /></BigLabel>
            </Big>
            <Big $w={43}>
              <BigIcon><FindIcon /></BigIcon>
              <span>Find &amp;</span>
              <BigLabel>Select<Caret /></BigLabel>
            </Big>
          </GroupBody>
          <GroupFooter><GroupLabel>Editing</GroupLabel></GroupFooter>
        </Group>

        <Group $grow>
          <GroupBody />
          <GroupFooter><Collapse><ChevronUp /></Collapse></GroupFooter>
        </Group>
      </Ribbon>

      <FormulaBar>
        <FieldBox $w={101} $pl={7}>A26<Caret /></FieldBox>
        <Dots><i /><i /><i /></Dots>
        <FxButtons><CrossIcon /><CheckIcon /><Fx>fx</Fx></FxButtons>
        <FieldBox $grow $pl={11}>2<ChevronDown /></FieldBox>
      </FormulaBar>

      <SheetArea>
        <Grid>
          <Corner />
          {columns.map((c, i) => (
            <ColHead key={c} $sel={i === 0}>{c}</ColHead>
          ))}
          <RowHead>1</RowHead>
          {headers.map((h) => (
            <Cell key={h} $text>{h}</Cell>
          ))}
          {rows.map((r, i) => (
            <React.Fragment key={i}>
              <RowHead>{i + 2}</RowHead>
              {r.split("").map((v, j) => (
                <Cell key={j}>{v}</Cell>
              ))}
              <Cell />
            </React.Fragment>
          ))}
        </Grid>
        <VScroll>
          <VTrack>
            <VGroup>
              <ScrollBtn $w={15} $h={17}><Tri $dir="up" /></ScrollBtn>
              <VThumb />
            </VGroup>
            <ScrollBtn $w={15} $h={15}><Tri $dir="down" /></ScrollBtn>
          </VTrack>
        </VScroll>
      </SheetArea>

      <SheetTabs>
        <TabNav>
          <Tri $dir="left" $c="#c4c4c4" />
          <Tri $dir="right" $c="#c4c4c4" />
        </TabNav>
        <SheetTab>Sheet1</SheetTab>
        <AddSheet>+</AddSheet>
        <HScroll>
          <HGroup>
            <ScrollBtn $w={15} $h={16}><Tri $dir="left" /></ScrollBtn>
            <HThumb />
          </HGroup>
          <ScrollBtn $w={15} $h={16}><Tri $dir="right" /></ScrollBtn>
        </HScroll>
      </SheetTabs>

      <StatusBar>
        <Ready>Ready</Ready>
        <ViewBtn $active><GridViewIcon /></ViewBtn>
        <ViewBtn><PageViewIcon /></ViewBtn>
        <ViewBtn><BreakViewIcon /></ViewBtn>
        <ZoomSign $w={15}>-</ZoomSign>
        <Slider />
        <ZoomSign $w={15}>+</ZoomSign>
        <ZoomValue>100%</ZoomValue>
      </StatusBar>

      <RowFrame />
      <DataFrame />
      <Note $x={127} $y={186}>Baris 1 : Nama Kolom</Note>
      <Note $x={44} $y={259}>Baris 2 dan seterusnya : Data</Note>
      <Arrow $x={24} $y={188} width="86" height="26" viewBox="0 0 86 26">
        <path d="M0 6h41V0l45 13-45 12v-6H0z" fill={RED} />
      </Arrow>
      <Arrow $x={-1} $y={252} width="26" height="60" viewBox="0 0 26 60">
        <path d="M6 0h14v28h6L13 59 0 28h6z" fill={RED} />
      </Arrow>
    </Window>
  );
}
